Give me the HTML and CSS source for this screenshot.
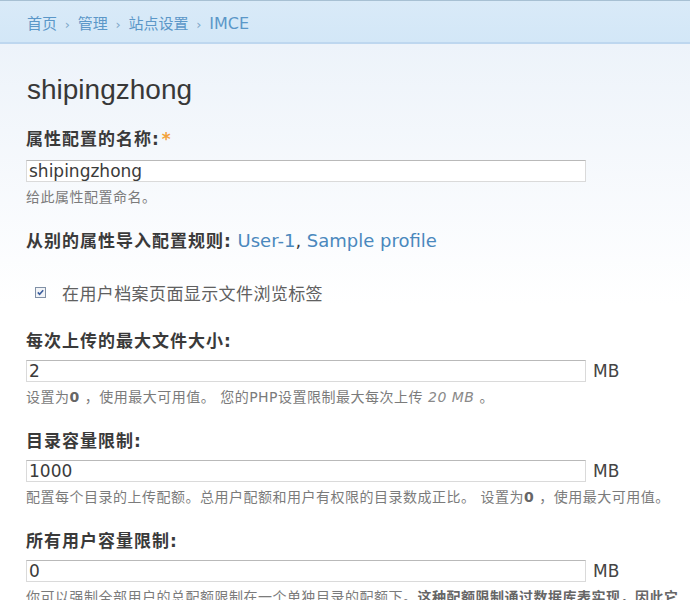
FILE: index.html
```html
<!DOCTYPE html>
<html lang="zh-CN">
<head>
    <meta charset="UTF-8">
    <title>shipingzhong | IMCE</title>
    <link rel="stylesheet" href="styles.css">
</head>
<body>
    <div class="breadcrumb">
        <a href="#">首页</a> <span class="sep">›</span>
        <a href="#">管理</a> <span class="sep">›</span>
        <a href="#">站点设置</a> <span class="sep">›</span>
        <a href="#" class="last">IMCE</a>
    </div>

    <div class="main">
        <h1 class="title">shipingzhong</h1>

        <form class="profile-form">
            <div class="form-item">
                <label class="label">属性配置的名称:<span class="required">*</span></label>
                <div class="field">
                    <input class="text" type="text" value="shipingzhong">
                </div>
                <div class="description">给此属性配置命名。</div>
            </div>

            <div class="form-item import">
                <span class="label">从别的属性导入配置规则:</span>
                <a href="#">User-1</a>, <a href="#">Sample profile</a>
            </div>

            <div class="form-item check">
                <span class="checkbox">
                    <svg width="11" height="11" viewBox="0 0 11 11">
                        <rect x="0.5" y="0.5" width="10" height="10" fill="#f2f4f7" stroke="#8090a6"/>
                        <path d="M2.8 5.4 L4.6 7.3 L8.2 3.2" fill="none" stroke="#3d5f9e" stroke-width="1.6"/>
                    </svg>
                </span>
                <span class="check-label">在用户档案页面显示文件浏览标签</span>
            </div>

            <div class="form-item">
                <label class="label">每次上传的最大文件大小:</label>
                <div class="field">
                    <input class="text" type="text" value="2">
                    <span class="unit">MB</span>
                </div>
                <div class="description">设置为<strong>0</strong> ，使用最大可用值。 您的PHP设置限制最大每次上传 <em>20 MB</em> 。</div>
            </div>

            <div class="form-item">
                <label class="label">目录容量限制:</label>
                <div class="field">
                    <input class="text" type="text" value="1000">
                    <span class="unit">MB</span>
                </div>
                <div class="description">配置每个目录的上传配额。总用户配额和用户有权限的目录数成正比。 设置为<strong>0</strong> ，使用最大可用值。</div>
            </div>

            <div class="form-item">
                <label class="label">所有用户容量限制:</label>
                <div class="field">
                    <input class="text" type="text" value="0">
                    <span class="unit">MB</span>
                </div>
                <div class="description">你可以强制全部用户的总配额限制在一个单独目录的配额下。<strong>这种配额限制通过数据库表实现，因此它</strong></div>
            </div>
        </form>
    </div>
</body>
</html>
```

FILE: styles.css
```css
html, body {
    margin: 0;
    overflow: hidden;
}
body {
    font-family: "DejaVu Sans", "Noto Sans CJK SC", sans-serif;
    color: #3b3b3b;
    background: #fff;
}
a {
    color: #4a88bd;
    text-decoration: none;
}
.breadcrumb {
    height: 39px;
    padding-top: 2px;
    line-height: 41px;
    padding-left: 27px;
    font-size: 15px;
    border-top: 1px solid #a7c0d3;
    border-bottom: 2px solid #bed7ef;
    background: linear-gradient(#d9eaf8, #d3e7f7);
}
.breadcrumb a {
    color: #5b97c8;
}
.breadcrumb .last {
    font-size: 16px;
}
.breadcrumb .sep {
    color: #7ea7c8;
    font-size: 13px;
    margin: 0 3px;
}
.main {
    padding: 1px 26px 0;
    background: linear-gradient(#edf3fa, #fff 260px);
    min-height: 600px;
}
.title {
    margin: 28px 0 0 1px;
    font-family: "Liberation Sans", Arial, sans-serif;
    font-size: 28px;
    font-weight: normal;
    line-height: 34px;
    color: #383838;
}
.form-item {
    margin-top: 25px;
}
.form-item:first-child {
    margin-top: 21px;
}
.label {
    display: block;
    font-size: 17px;
    font-weight: bold;
    line-height: 22px;
    letter-spacing: 1px;
    color: #3a3a3a;
}
.required {
    color: #f3a23a;
    margin-left: 2px;
}
.field {
    display: flex;
    align-items: center;
    gap: 7px;
    margin-top: 8px;
}
.form-item:first-child .field {
    margin-top: 10px;
}
.text {
    box-sizing: border-box;
    width: 560px;
    height: 22px;
    margin: 0;
    padding: 0 2px;
    font-family: "DejaVu Sans", sans-serif;
    font-size: 17px;
    color: #3b3b3b;
    background: #fff;
    border: 1px solid #dadada;
    border-top-color: #b9b9b9;
    outline: none;
}
.unit {
    font-size: 17px;
    color: #444;
}
.description {
    margin-top: 7px;
    font-size: 14px;
    line-height: 16px;
    letter-spacing: 0.5px;
    color: #7b7b7b;
    white-space: nowrap;
}
.description strong {
    color: #666;
}
.description em {
    color: #8a8a8a;
}
.import {
    font-size: 18px;
    line-height: 22px;
}
.import .label {
    display: inline;
}
.check {
    display: flex;
    align-items: center;
    margin-top: 31px;
    padding-left: 9px;
    line-height: 22px;
}
.checkbox {
    display: flex;
    width: 11px;
    height: 11px;
    margin-top: -3px;
}
.check-label {
    margin-left: 16px;
    font-size: 17px;
    letter-spacing: 0.4px;
    color: #606060;
}
```
